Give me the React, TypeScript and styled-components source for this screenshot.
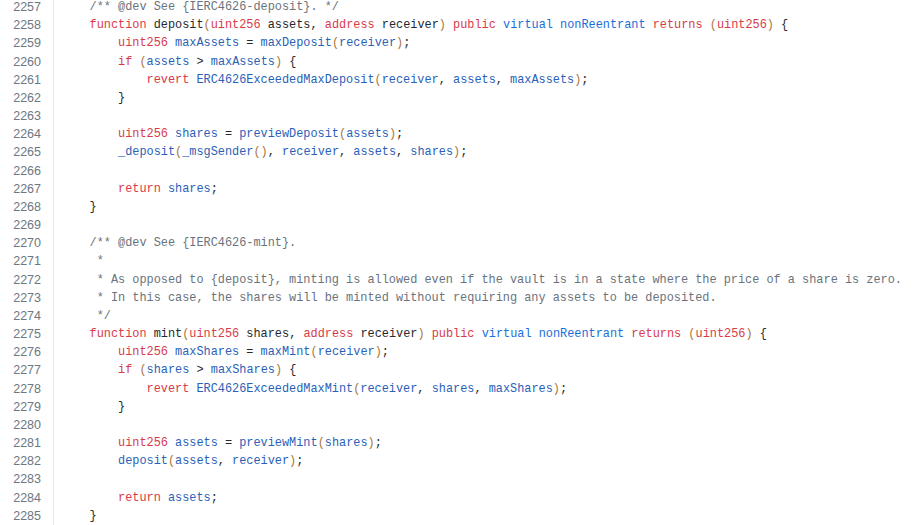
import React from "react";
import styled, { createGlobalStyle } from "styled-components";

const Global = createGlobalStyle`
  html, body { margin: 0; padding: 0; background: #ffffff; }
  body { overflow: hidden; }
`;

type Kind = "kw" | "mod" | "id" | "plain" | "paren" | "comment" | "decl";

const colors: Record<Kind, string> = {
  kw: "#d73a49",
  mod: "#1a6ed8",
  id: "#2b5fb8",
  plain: "#24292e",
  paren: "#a8763a",
  comment: "#6a737d",
  decl: "#24292e",
};

const Viewer = styled.div`
  margin-top: -2px;
  display: flex;
  flex-direction: column;
  font-size: 12px;
`;

const Row = styled.div`
  display: grid;
  grid-template-columns: 54px 1fr;
  height: 18.18px;
  line-height: 18.18px;
`;

const LineNo = styled.div`
  box-sizing: border-box;
  text-align: right;
  padding-right: 12px;
  border-right: 1px solid #e4e6e8;
  color: #6e7781;
  font-family: "Liberation Sans", Arial, sans-serif;
  font-size: 12.5px;
`;

const Code = styled.div`
  padding-left: 7px;
  white-space: pre;
  font-family: "Liberation Mono", "Courier New", monospace;
  font-size: 11.88px;
  color: #24292e;
`;

const Tok = styled.span<{ $kind: Kind }>`
  color: ${(p) => colors[p.$kind]};
`;

const lines: string[] = [
  "    /** @dev See {IERC4626-deposit}. */",
  "    function deposit(uint256 assets, address receiver) public virtual nonReentrant returns (uint256) {",
  "        uint256 maxAssets = maxDeposit(receiver);",
  "        if (assets > maxAssets) {",
  "            revert ERC4626ExceededMaxDeposit(receiver, assets, maxAssets);",
  "        }",
  "",
  "        uint256 shares = previewDeposit(assets);",
  "        _deposit(_msgSender(), receiver, assets, shares);",
  "",
  "        return shares;",
  "    }",
  "",
  "    /** @dev See {IERC4626-mint}.",
  "     *",
  "     * As opposed to {deposit}, minting is allowed even if the vault is in a state where the price of a share is zero.",
  "     * In this case, the shares will be minted without requiring any assets to be deposited.",
  "     */",
  "    function mint(uint256 shares, address receiver) public virtual nonReentrant returns (uint256) {",
  "        uint256 maxShares = maxMint(receiver);",
  "        if (shares > maxShares) {",
  "            revert ERC4626ExceededMaxMint(receiver, shares, maxShares);",
  "        }",
  "",
  "        uint256 assets = previewMint(shares);",
  "        deposit(assets, receiver);",
  "",
  "        return assets;",
  "    }",
];

const red = new Set(["function", "uint256", "address", "public", "returns", "if", "revert", "return"]);
const blue = new Set(["virtual", "nonReentrant"]);

function tokenize(line: string): { text: string; kind: Kind }[] {
  const t = line.trim();
  if (t.startsWith("/**") || t.startsWith("*")) {
    return [{ text: line, kind: "comment" }];
  }
  const sig = t.startsWith("function");
  const parts = line.match(/\s+|[A-Za-z_][A-Za-z0-9_]*|\d+|./g) || [];
  return parts.map((p) => {
    let kind: Kind = "plain";
    if (/^[A-Za-z_]/.test(p)) {
      if (red.has(p)) kind = "kw";
      else if (blue.has(p)) kind = "mod";
      else kind = sig ? "decl" : "id";
    } else if (p === "(" || p === ")") {
      kind = "paren";
    }
    return { text: p, kind };
  });
}

export default function App() {
  return (
    <>
      <Global />
      <Viewer>
        {lines.map((line, i) => (
          <Row key={i}>
            <LineNo>{2257 + i}</LineNo>
            <Code>
              {tokenize(line).map((tk, j) => (
                <Tok key={j} $kind={tk.kind}>
                  {tk.text}
                </Tok>
              ))}
            </Code>
          </Row>
        ))}
      </Viewer>
    </>
  );
}
